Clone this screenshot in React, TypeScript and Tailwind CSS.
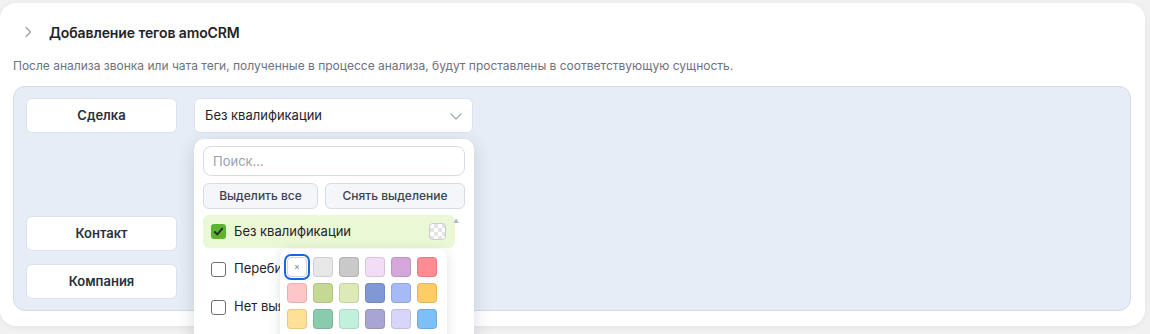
import React, { useState } from 'react';

const palette = [
    ['none', '#e8e8e8', '#c9c9c9', '#f3dcf6', '#d5a6d9', '#ff8b93'],
    ['#ffc6c9', '#c6d993', '#dde9b6', '#8099d4', '#a5baf6', '#ffcc66'],
    ['#ffe097', '#8acbae', '#c1f1dd', '#a9a5d2', '#d7d5fa', '#7dbff6'],
];

const Check = ({ checked }: { checked: boolean }) =>
    checked ? (
        <span className="w-[15px] h-[15px] rounded-[3px] bg-[#5cb531] flex items-center justify-center shrink-0">
            <svg width="11" height="11" viewBox="0 0 12 12" fill="none">
                <path d="M2 6.5 L4.8 9.2 L10 2.8" stroke="#2b2f2a" strokeWidth="2.2" strokeLinecap="round" strokeLinejoin="round" />
            </svg>
        </span>
    ) : (
        <span className="w-[15px] h-[15px] rounded-[3px] border border-[#6b7078] bg-white shrink-0" />
    );

const App: React.FC = () => {
    const [query, setQuery] = useState('');

    return (
        <div className="h-[334px] overflow-hidden bg-[#f1f1f2] pt-[3px] pr-[5px] font-['Inter',sans-serif] text-[#1f2329]">
            <div className="relative bg-white rounded-2xl shadow-[0_1px_6px_rgba(0,0,0,0.06)] pt-[18px] pb-[15px]">
                {/* header */}
                <div className="flex items-center h-[22px] pl-[21px] gap-[14px]">
                    <svg width="14" height="14" viewBox="0 0 14 14" fill="none">
                        <path d="M5 2.5 L9.5 7 L5 11.5" stroke="#9aa1ab" strokeWidth="1.3" strokeLinecap="round" strokeLinejoin="round" />
                    </svg>
                    <span className="text-[14px] font-semibold tracking-[-0.1px]">Добавление тегов amoCRM</span>
                </div>
                <p className="mt-[15px] px-[13px] text-[12px] leading-[16px] text-[#6b7380]">
                    После анализа звонка или чата теги, полученные в процессе анализа, будут проставлены в соответствующую сущность.
                </p>

                {/* mapping panel */}
                <div className="mt-[12px] ml-[13px] mr-[14px] h-[225px] rounded-xl border border-[#d3dbe6] bg-[#e6edf6] px-[12px] pt-[11px] flex flex-col gap-[13px]">
                    <div className="flex gap-[17px] h-[105px]">
                        <div className="w-[151px] h-[35px] rounded-md border border-[#dde3ec] bg-white flex items-center justify-center text-[13px] font-semibold text-[#27303d]">
                            Сделка
                        </div>
                        <div className="w-[279px] h-[35px] rounded-md border border-[#dde3ec] bg-white flex items-center justify-between pl-[10px] pr-[9px] text-[13px] text-[#1f2329]">
                            <span>Без квалификации</span>
                            <svg width="14" height="14" viewBox="0 0 14 14" fill="none">
                                <path d="M2 5 L7 10 L12 5" stroke="#a3a9b3" strokeWidth="1.2" strokeLinecap="round" strokeLinejoin="round" />
                            </svg>
                        </div>
                    </div>
                    <div className="w-[151px] h-[35px] rounded-md border border-[#dde3ec] bg-white flex items-center justify-center text-[13px] font-semibold text-[#27303d]">
                        Контакт
                    </div>
                    <div className="w-[151px] h-[35px] rounded-md border border-[#dde3ec] bg-white flex items-center justify-center text-[13px] font-semibold text-[#27303d]">
                        Компания
                    </div>
                </div>

                {/* open dropdown */}
                <div className="absolute left-[194px] top-[136px] w-[280px] h-[230px] rounded-[10px] bg-white shadow-[0_4px_18px_rgba(30,40,60,0.16)] px-[9px] pt-[7px]">
                    <input
                        value={query}
                        onChange={(e) => setQuery(e.target.value)}
                        placeholder="Поиск..."
                        className="w-[262px] h-[30px] rounded-lg border border-[#d7dde6] px-[9px] text-[13px] placeholder:text-[#9aa1ac] focus:outline-none"
                    />
                    <div className="flex gap-[7px] mt-[7px]">
                        <button className="w-[115px] h-[26px] rounded-md border border-[#d7dde6] bg-[#f4f6f9] text-[12px] font-medium text-[#3a4250]">
                            Выделить все
                        </button>
                        <button className="w-[140px] h-[26px] rounded-md border border-[#d7dde6] bg-[#f4f6f9] text-[12px] font-medium text-[#3a4250]">
                            Снять выделение
                        </button>
                    </div>
                    <div className="relative mt-[6px] flex flex-col gap-[4px]">
                        <div className="w-[252px] h-[33px] rounded-md bg-[#ebf8d6] flex items-center pl-[8px] pr-[9px] gap-[8px] text-[13px]">
                            <Check checked />
                            <span className="flex-1">Без квалификации</span>
                            <span className="w-[17px] h-[17px] rounded-[4px] border border-[#c9ccd2] bg-[repeating-conic-gradient(#e4e4e4_0_25%,#ffffff_0_50%)] bg-[length:8px_8px]" />
                        </div>
                        {/* rows partly hidden under the colour picker */}
                        <div className="w-[252px] h-[34px] flex items-center pl-[8px] gap-[8px] text-[13px]">
                            <Check checked={false} />
                            <span className="w-[46px] overflow-hidden whitespace-nowrap">Перебил клиента</span>
                        </div>
                        <div className="w-[252px] h-[34px] flex items-center pl-[8px] gap-[8px] text-[13px]">
                            <Check checked={false} />
                            <span className="w-[46px] overflow-hidden whitespace-nowrap">Нет выявления потребностей</span>
                        </div>
                        <span className="absolute right-[6px] top-[1px] text-[6px] text-[#b5bac2]">▲</span>
                    </div>

                    {/* colour picker */}
                    <div className="absolute left-[86px] top-[110px] w-[167px] h-[100px] rounded-lg bg-white shadow-[0_2px_12px_rgba(30,40,60,0.14)] pl-[7px] pt-[8px] grid grid-cols-[repeat(6,20px)] auto-rows-[20px] gap-[6px]">
                        {palette.flat().map((c, i) =>
                            c === 'none' ? (
                                <span key={i} className="w-[20px] h-[20px] rounded-[4px] border border-[#d0d4da] bg-white ring-2 ring-offset-1 ring-[#1467dc] flex items-center justify-center text-[9px] text-[#7b828c]">
                                    ×
                                </span>
                            ) : (
                                <span key={i} className="w-[20px] h-[20px] rounded-[4px] border border-black/10" style={{ backgroundColor: c }} />
                            )
                        )}
                    </div>
                </div>
            </div>
        </div>
    );
};

export default App;
